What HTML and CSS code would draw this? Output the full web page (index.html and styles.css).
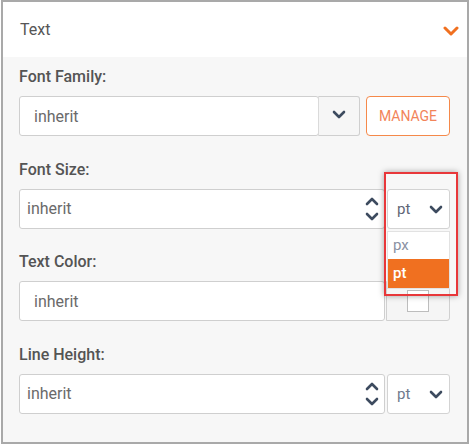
FILE: index.html
```html
<!DOCTYPE html>
<html>
<head>
<meta charset="utf-8">
<link rel="stylesheet" href="styles.css">
</head>
<body>
<div class="panel">
  <div class="panel-header">
    <span class="panel-title">Text</span>
    <svg class="chev-orange" width="16" height="10" viewBox="0 0 16 10"><path d="M2 2l6 6 6-6" fill="none" stroke="#f07020" stroke-width="3" stroke-linecap="round" stroke-linejoin="round"/></svg>
  </div>
  <div class="panel-body">
    <div class="field">
      <div class="field-label">Font Family:</div>
      <div class="row">
        <div class="input input-wide">inherit</div>
        <div class="btn-drop">
          <svg width="14" height="9" viewBox="0 0 14 9"><path d="M2 2l5 5 5-5" fill="none" stroke="#3d4b5f" stroke-width="2.6" stroke-linecap="round" stroke-linejoin="round"/></svg>
        </div>
        <div class="btn-manage">MANAGE</div>
      </div>
    </div>

    <div class="field">
      <div class="field-label">Font Size:</div>
      <div class="row">
        <div class="input input-num">
          <span>inherit</span>
          <span class="spinner">
            <svg width="14" height="9" viewBox="0 0 14 9"><path d="M2 7l5-5 5 5" fill="none" stroke="#3d4b5f" stroke-width="2.6" stroke-linecap="round" stroke-linejoin="round"/></svg>
            <svg width="14" height="9" viewBox="0 0 14 9"><path d="M2 2l5 5 5-5" fill="none" stroke="#3d4b5f" stroke-width="2.6" stroke-linecap="round" stroke-linejoin="round"/></svg>
          </span>
        </div>
        <div class="unit-wrap">
          <div class="unit">
            <span>pt</span>
            <svg width="14" height="9" viewBox="0 0 14 9"><path d="M2 2l5 5 5-5" fill="none" stroke="#3d4b5f" stroke-width="2.6" stroke-linecap="round" stroke-linejoin="round"/></svg>
          </div>
          <ul class="menu">
            <li class="menu-item">px</li>
            <li class="menu-item menu-item-active">pt</li>
          </ul>
          <div class="highlight"></div>
        </div>
      </div>
    </div>

    <div class="field">
      <div class="field-label">Text Color:</div>
      <div class="row">
        <div class="input input-wide">inherit</div>
        <div class="swatch-btn"><span class="swatch"></span></div>
      </div>
    </div>

    <div class="field">
      <div class="field-label">Line Height:</div>
      <div class="row">
        <div class="input input-num">
          <span>inherit</span>
          <span class="spinner">
            <svg width="14" height="9" viewBox="0 0 14 9"><path d="M2 7l5-5 5 5" fill="none" stroke="#3d4b5f" stroke-width="2.6" stroke-linecap="round" stroke-linejoin="round"/></svg>
            <svg width="14" height="9" viewBox="0 0 14 9"><path d="M2 2l5 5 5-5" fill="none" stroke="#3d4b5f" stroke-width="2.6" stroke-linecap="round" stroke-linejoin="round"/></svg>
          </span>
        </div>
        <div class="unit-wrap">
          <div class="unit unit-light">
            <span>pt</span>
            <svg width="14" height="9" viewBox="0 0 14 9"><path d="M2 2l5 5 5-5" fill="none" stroke="#3d4b5f" stroke-width="2.6" stroke-linecap="round" stroke-linejoin="round"/></svg>
          </div>
        </div>
      </div>
    </div>
  </div>
</div>
</body>
</html>
```
FILE: styles.css
```css
* { box-sizing: border-box; }
html, body { margin: 0; padding: 0; background: #fff; }
body { font-family: Roboto, "Liberation Sans", sans-serif; }

.panel {
  margin-left: 1px;
  width: 468px;
  height: 444px;
  border: 2px solid #a9a9a9;
  background: #f7f7f7;
  display: flex;
  flex-direction: column;
}

.panel-header {
  height: 55px;
  flex: none;
  background: #fff;
  display: flex;
  align-items: center;
  justify-content: space-between;
  padding: 0 8px 0 17px;
}
.panel-title { font-size: 16px; color: #565656; }
.chev-orange { display: block; margin-top: 3px; }

.panel-body {
  padding: 10px 17px 0 16px;
  display: flex;
  flex-direction: column;
  gap: 23.67px;
}

.field-label {
  font-size: 16px;
  line-height: 19px;
  font-weight: 500;
  color: #545454;
  margin-bottom: 10px;
}

.row { display: flex; height: 40px; }

.input {
  background: #fff;
  border: 1px solid #cfcfcf;
  border-radius: 3px;
  font-size: 16px;
  color: #6a6a6a;
  display: flex;
  align-items: center;
  flex: 1;
  min-width: 0;
}
.input-wide { padding-left: 14px; }
.input-num { padding: 0 5px 0 7px; justify-content: space-between; }

.spinner { display: flex; flex-direction: column; gap: 6px; margin-top: 1px; }
.spinner svg { display: block; }

.btn-drop {
  width: 42px;
  flex: none;
  background: #f6f6f6;
  border: 1px solid #cfcfcf;
  border-left-color: #dadada;
  border-radius: 0 3px 3px 0;
  display: flex;
  align-items: center;
  justify-content: center;
  margin-left: -1px;
}
.btn-drop svg { display: block; margin-top: -3px; }

.btn-manage {
  width: 84px;
  flex: none;
  margin-left: 6px;
  border: 1.5px solid #f5894a;
  border-radius: 4px;
  background: #fff;
  color: #f2845a;
  font-size: 14px;
  display: flex;
  align-items: center;
  justify-content: center;
}

.unit-wrap { position: relative; width: 63px; flex: none; margin-left: 2px; }
.unit {
  height: 100%;
  background: #fff;
  border: 1px solid #d3d3d3;
  border-radius: 3px;
  display: flex;
  align-items: center;
  justify-content: space-between;
  padding: 0 6px 0 9px;
  font-size: 15px;
  color: #5f6676;
}
.unit svg { display: block; margin-top: 2px; }
.unit-light { color: #6f7a8c; }

.menu {
  position: absolute;
  left: 0;
  top: 42px;
  width: 63px;
  margin: 0;
  padding: 0;
  list-style: none;
  background: #fff;
  border: 1px solid #e2e2e2;
  z-index: 2;
}
.menu-item {
  height: 27px;
  line-height: 27px;
  padding-left: 5px;
  font-size: 15px;
  color: #8a91a2;
}
.menu-item-active {
  height: 29px;
  line-height: 29px;
  background: #f07020;
  color: #fff;
  font-weight: 500;
}

.highlight {
  position: absolute;
  left: -3px;
  top: -17px;
  width: 74px;
  height: 124px;
  border: 2px solid #e8373a;
  box-shadow: 0 0 6px rgba(0, 0, 0, 0.35);
  z-index: 3;
  pointer-events: none;
}

.swatch-btn {
  width: 64px;
  flex: none;
  margin-left: 1px;
  background: #f5f5f5;
  border: 1px solid #d0d0d0;
  border-radius: 0 3px 3px 0;
  display: flex;
  align-items: center;
  justify-content: center;
}
.swatch {
  width: 22px;
  height: 22px;
  background: #fff;
  border: 1px solid #bdbdbd;
}
```
